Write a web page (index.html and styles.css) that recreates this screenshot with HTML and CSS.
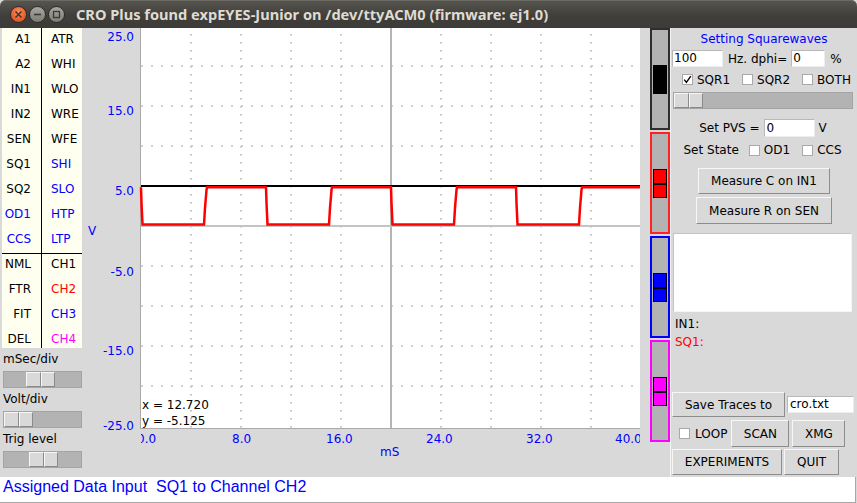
FILE: index.html
```html
<!DOCTYPE html>
<html lang="en">
<head>
<meta charset="utf-8">
<title>CRO Plus</title>
<link rel="stylesheet" href="styles.css">
</head>
<body>
<div class="window">
  <header class="titlebar">
    <div class="wm-buttons">
      <span class="wm wm-close"><svg width="9" height="9" viewBox="0 0 9 9"><path d="M1.5 1.5 L7.5 7.5 M7.5 1.5 L1.5 7.5" stroke="#3a3935" stroke-width="1.6" fill="none"/></svg></span>
      <span class="wm wm-min"><svg width="9" height="9" viewBox="0 0 9 9"><path d="M1 4.5 H8" stroke="#3a3935" stroke-width="1.6" fill="none"/></svg></span>
      <span class="wm wm-max"><svg width="9" height="9" viewBox="0 0 9 9"><rect x="1.5" y="1.5" width="6" height="6" stroke="#3a3935" stroke-width="1.3" fill="none"/></svg></span>
    </div>
    <h1 class="title">CRO Plus found expEYES-Junior on /dev/ttyACM0 (firmware: ej1.0)</h1>
  </header>

  <main class="workspace">
    <aside class="leftbar">
      <div class="cmdtable">
        <div class="cmd-grid cmd-top">
          <span class="c1">A1</span><span class="c2">ATR</span>
          <span class="c1">A2</span><span class="c2">WHI</span>
          <span class="c1">IN1</span><span class="c2">WLO</span>
          <span class="c1">IN2</span><span class="c2">WRE</span>
          <span class="c1">SEN</span><span class="c2">WFE</span>
          <span class="c1">SQ1</span><span class="c2 blue">SHI</span>
          <span class="c1">SQ2</span><span class="c2 blue">SLO</span>
          <span class="c1 blue">OD1</span><span class="c2 blue">HTP</span>
          <span class="c1 blue">CCS</span><span class="c2 blue">LTP</span>
        </div>
        <div class="cmd-grid cmd-bottom">
          <span class="c1">NML</span><span class="c2">CH1</span>
          <span class="c1">FTR</span><span class="c2 red">CH2</span>
          <span class="c1">FIT</span><span class="c2 blue">CH3</span>
          <span class="c1">DEL</span><span class="c2 magenta">CH4</span>
        </div>
      </div>
      <div class="ctl-label">mSec/div</div>
      <div class="hslider small"><span class="thumb" style="margin-left:22px"><i></i><i></i></span></div>
      <div class="ctl-label">Volt/div</div>
      <div class="hslider small"><span class="thumb" style="margin-left:0px"><i></i><i></i></span></div>
      <div class="ctl-label">Trig level</div>
      <div class="hslider small"><span class="thumb" style="margin-left:25px"><i></i><i></i></span></div>
    </aside>

    <section class="plot">
      <svg class="scope" width="558" height="449" viewBox="0 0 558 449">
        <defs>
          <clipPath id="xclip"><rect x="59" y="400" width="499" height="49"/></clipPath>
        </defs>
        <rect x="58" y="0" width="500" height="400" fill="#ffffff"/>
        <line x1="58.5" y1="0" x2="58.5" y2="401" stroke="#a9a9a9" stroke-width="1"/>
        <line x1="58" y1="400.5" x2="558" y2="400.5" stroke="#a9a9a9" stroke-width="1"/>
        <g stroke="#c2c2c2" stroke-width="1.6" stroke-dasharray="2 8">
          <line x1="59" y1="38" x2="558" y2="38"/>
          <line x1="59" y1="78" x2="558" y2="78"/>
          <line x1="59" y1="118" x2="558" y2="118"/>
          <line x1="59" y1="158" x2="558" y2="158"/>
          <line x1="59" y1="238" x2="558" y2="238"/>
          <line x1="59" y1="278" x2="558" y2="278"/>
          <line x1="59" y1="318" x2="558" y2="318"/>
          <line x1="59" y1="358" x2="558" y2="358"/>
        </g>
        <g stroke="#c2c2c2" stroke-width="2" stroke-dasharray="1.5 6.5">
          <line x1="109" y1="6" x2="109" y2="400"/>
          <line x1="159" y1="6" x2="159" y2="400"/>
          <line x1="209" y1="6" x2="209" y2="400"/>
          <line x1="259" y1="6" x2="259" y2="400"/>
          <line x1="359" y1="6" x2="359" y2="400"/>
          <line x1="409" y1="6" x2="409" y2="400"/>
          <line x1="459" y1="6" x2="459" y2="400"/>
          <line x1="509" y1="6" x2="509" y2="400"/>
        </g>
        <line x1="309" y1="0" x2="309" y2="400" stroke="#b4b4b4" stroke-width="2"/>
        <line x1="59" y1="198" x2="558" y2="198" stroke="#c4c4c4" stroke-width="2"/>
        <line x1="59" y1="158" x2="558" y2="158" stroke="#000000" stroke-width="2"/>
        <polyline fill="none" stroke="#ff0000" stroke-width="2.5" points="59,159.3 59.5,175 60.5,196.5 122,196.5 123,180 124.5,162 125,159.3 184,159.3 184.5,175 185.5,196.5 247,196.5 248,180 249.5,162 250,159.3 309,159.3 309.5,175 310.5,196.5 372,196.5 373,180 374.5,162 375,159.3 434,159.3 434.5,175 435.5,196.5 497,196.5 498,180 499.5,162 500,159.3 558,159.3"/>
        <g class="cursor-text">
          <text x="60" y="380.5">x = 12.720</text>
          <text x="60" y="396.5">y = -5.125</text>
        </g>
        <g class="axis-text" text-anchor="end">
          <text x="52" y="13">25.0</text>
          <text x="52" y="86.5">15.0</text>
          <text x="52" y="167">5.0</text>
          <text x="52" y="247.5">-5.0</text>
          <text x="52" y="327">-15.0</text>
          <text x="52" y="402">-25.0</text>
        </g>
        <text class="axis-text" x="6" y="206.5">V</text>
        <g class="axis-text" clip-path="url(#xclip)">
          <text x="55" y="414.5">0.0</text>
          <text x="150" y="414.5">8.0</text>
          <text x="244" y="414.5">16.0</text>
          <text x="344" y="414.5">24.0</text>
          <text x="444" y="414.5">32.0</text>
          <text x="533" y="414.5">40.0</text>
        </g>
        <text class="axis-text" x="298" y="427.5">mS</text>
      </svg>
    </section>

    <div class="vsliders">
      <div class="vslider v-black"><span class="thumb"><i></i><i></i></span></div>
      <div class="vslider v-red"><span class="thumb"><i></i><i></i></span></div>
      <div class="vslider v-blue"><span class="thumb"><i></i><i></i></span></div>
      <div class="vslider v-mag"><span class="thumb"><i></i><i></i></span></div>
    </div>

    <section class="panel">
      <div class="sq-title blue">Setting Squarewaves</div>
      <div class="freq-row">
        <span class="entry e-freq">100</span>
        <span class="freq-label">Hz. dphi=</span>
        <span class="entry e-phi">0</span>
        <span class="pct">%</span>
      </div>
      <div class="chk-row">
        <span class="chkitem"><span class="chk"><svg width="9" height="9" viewBox="0 0 9 9"><path d="M1.2 4.6 L3.4 7.4 L7.8 1.2" fill="none" stroke="#000" stroke-width="1.4"/></svg></span>SQR1</span>
        <span class="chkitem"><span class="chk"></span>SQR2</span>
        <span class="chkitem"><span class="chk"></span>BOTH</span>
      </div>
      <div class="hslider wide"><span class="thumb"><i></i><i></i></span></div>
      <div class="pvs-row">
        <span class="pvs-label">Set PVS =</span>
        <span class="entry e-pvs">0</span>
        <span class="unit">V</span>
      </div>
      <div class="state-row">
        <span class="state-label">Set State</span>
        <span class="chkitem"><span class="chk"></span>OD1</span>
        <span class="chkitem"><span class="chk"></span>CCS</span>
      </div>
      <button class="btn b-mc">Measure C on IN1</button>
      <button class="btn b-mr">Measure R on SEN</button>
      <div class="msgbox"></div>
      <div class="readouts">
        <div>IN1:</div>
        <div class="red">SQ1:</div>
      </div>
      <div class="actions">
        <div class="save-row">
          <button class="btn b-save">Save Traces to</button>
          <span class="entry e-file">cro.txt</span>
        </div>
        <div class="loop-row">
          <span class="chkitem loop"><span class="chk"></span>LOOP</span>
          <button class="btn b-scan">SCAN</button>
          <button class="btn b-xmg">XMG</button>
        </div>
        <div class="exit-row">
          <button class="btn b-exp">EXPERIMENTS</button>
          <button class="btn b-quit">QUIT</button>
        </div>
      </div>
    </section>
  </main>

  <footer class="status">Assigned Data Input  SQ1 to Channel CH2</footer>
</div>
</body>
</html>
```

FILE: styles.css
```css
html, body {
  margin: 0;
  padding: 0;
  background: #d9d9d9;
}

body {
  font-family: "DejaVu Sans", sans-serif;
  font-size: 12px;
  color: #000;
}

.window {
  width: 857px;
  height: 503px;
  display: flex;
  flex-direction: column;
  overflow: hidden;
}

/* ---------- title bar ---------- */
.titlebar {
  flex: none;
  height: 28px;
  display: flex;
  align-items: center;
  background: linear-gradient(#57564f, #403f3b 55%, #3c3b37);
  border-radius: 6px 6px 0 0;
  box-shadow: inset 0 1px 0 #6b6a64;
}

.wm-buttons {
  display: flex;
  gap: 2px;
  margin-left: 10px;
}

.wm {
  width: 17px;
  height: 17px;
  box-sizing: border-box;
  border-radius: 50%;
  display: flex;
  align-items: center;
  justify-content: center;
  border: 1px solid #2c2b28;
}

.wm svg { display: block; }

.wm-close {
  background: radial-gradient(circle at 50% 35%, #f88d5e, #e55d2b 65%, #c9471c);
}

.wm-min,
.wm-max {
  background: linear-gradient(#a9a79f, #7d7b75);
}

.title {
  margin: 0 0 0 11px;
  font-family: "Noto Sans", sans-serif;
  font-weight: bold;
  font-size: 14.6px;
  color: #dfdbd2;
  white-space: nowrap;
}

/* ---------- workspace ---------- */
.workspace {
  flex: none;
  height: 449px;
  display: flex;
}

.leftbar {
  flex: none;
  width: 82px;
}

.cmdtable {
  width: 80px;
  margin-left: 2px;
  background: #fffff0;
}

.cmd-grid {
  display: grid;
  grid-template-columns: 40px 40px;
}

.cmd-top {
  grid-auto-rows: 25px;
  border-bottom: 1px solid #000;
}

.cmd-bottom {
  grid-template-rows: 25px 25px 25px 19px;
}

.cmd-grid span {
  line-height: 22px;
  white-space: nowrap;
}

.cmd-bottom span {
  line-height: 21px;
}

.c1 {
  box-sizing: border-box;
  border-right: 1px solid #000;
  text-align: right;
  padding-right: 10px;
}

.c2 {
  padding-left: 9px;
}

.blue { color: #0000ff; }
.red { color: #ff0000; }
.magenta { color: #ff00ff; }

.ctl-label {
  height: 22px;
  line-height: 22px;
  padding-left: 3px;
}

/* horizontal slider */
.hslider {
  box-sizing: border-box;
  height: 17px;
  border: 1px solid #a4a4a4;
  background: #b3b3b3;
  display: flex;
}

.hslider.small {
  width: 79px;
  margin: 1px 0 0 3px;
}

.hslider.wide {
  width: 180px;
  margin-left: 2px;
}

.hslider .thumb {
  display: flex;
  height: 15px;
}

.hslider .thumb i {
  box-sizing: border-box;
  width: 15px;
  height: 15px;
  background: #d9d9d9;
  border: 1px solid;
  border-color: #f7f7f7 #8a8a8a #8a8a8a #f7f7f7;
}

.hslider .thumb i + i {
  width: 14px;
}

/* ---------- plot ---------- */
.plot {
  flex: none;
  width: 558px;
}

.scope {
  display: block;
  font-family: "DejaVu Sans", sans-serif;
  font-size: 12px;
}

.axis-text { fill: #0000ff; }
.cursor-text { fill: #000; }

/* ---------- vertical sliders ---------- */
.vsliders {
  flex: none;
  width: 20px;
  margin-left: 10px;
  display: flex;
  flex-direction: column;
  gap: 2px;
}

.vslider {
  box-sizing: border-box;
  height: 102px;
  border: 2px solid;
  background: #b3b3b3;
  display: flex;
  align-items: center;
  justify-content: center;
}

.vslider .thumb {
  display: flex;
  flex-direction: column;
  width: 14px;
}

.vslider .thumb i {
  box-sizing: border-box;
  height: 15px;
  border: 1px solid;
}

.vslider .thumb i + i { height: 14px; }

.v-black { border-color: #2e2e2e; }
.v-black i { background: #000; border-color: #5c5c5c #111 #111 #5c5c5c; }

.v-red { border-color: #ff2222; }
.v-red i { background: #ff0000; border-color: #ff8a8a #b40000 #b40000 #ff8a8a; }

.v-blue { border-color: #0000ff; }
.v-blue i { background: #0000ff; border-color: #7070ff #0000a8 #0000a8 #7070ff; }

.v-mag { border-color: #ff00ff; }
.v-mag i { background: #ff00ff; border-color: #ff8aff #b000b0 #b000b0 #ff8aff; }

/* ---------- right panel ---------- */
.panel {
  flex: none;
  width: 186px;
  border-left: 1px solid #f4f4f4;
  display: flex;
  flex-direction: column;
}

.sq-title {
  height: 22px;
  line-height: 22px;
  text-align: center;
}

.entry {
  box-sizing: border-box;
  display: block;
  background: #fff;
  border: 1px solid;
  border-color: #b8b8b8 #ededed #ededed #b8b8b8;
  padding-left: 1px;
  height: 17px;
  line-height: 15px;
  white-space: nowrap;
}

.freq-row {
  height: 17px;
  display: flex;
  align-items: center;
  padding-left: 1px;
}

.e-freq { width: 51px; }
.e-phi { width: 34px; }
.freq-label { margin: 0 4px 0 5px; }
.pct { margin-left: 5px; }

.chk-row {
  height: 25px;
  display: flex;
  align-items: center;
  gap: 12px;
  padding-left: 11px;
}

.chkitem {
  display: flex;
  align-items: center;
}

.chk {
  box-sizing: border-box;
  width: 11px;
  height: 11px;
  margin-right: 4px;
  background: #fff;
  border: 1px solid #a9a9a9;
  display: flex;
  align-items: center;
  justify-content: center;
}

.chk svg { display: block; }

.pvs-row {
  margin-top: 10px;
  height: 18px;
  display: flex;
  align-items: center;
  justify-content: center;
  padding-right: 2px;
}

.pvs-label { margin-right: 4px; }
.e-pvs { width: 51px; height: 18px; line-height: 16px; padding-left: 2px; }
.unit { margin-left: 4px; }

.state-row {
  margin-top: 2px;
  height: 22px;
  display: flex;
  align-items: center;
  justify-content: center;
  padding-right: 3px;
}

.state-label { margin-right: 10px; }
.state-row .chkitem + .chkitem { margin-left: 12px; }

.btn {
  box-sizing: border-box;
  margin: 0;
  padding: 0;
  height: 26px;
  background: #d9d9d9;
  border: 1px solid;
  border-color: #f7f7f7 #8c8c8c #8c8c8c #f7f7f7;
  font-family: "DejaVu Sans", sans-serif;
  font-size: 12px;
  color: #000;
  display: flex;
  align-items: center;
  justify-content: center;
  white-space: nowrap;
}

.b-mc {
  align-self: center;
  width: 132px;
  margin-top: 7px;
}

.b-mr {
  align-self: center;
  width: 136px;
  height: 27px;
  margin-top: 3px;
}

.msgbox {
  box-sizing: border-box;
  height: 79px;
  margin: 9px 5px 0 2px;
  background: #fff;
  border: 1px solid;
  border-color: #c4c4c4 #f4f4f4 #f4f4f4 #c4c4c4;
}

.readouts {
  margin-top: 3px;
  padding-left: 4px;
  line-height: 18px;
}

.actions {
  margin-top: auto;
  padding-bottom: 2px;
}

.save-row {
  display: flex;
  align-items: center;
  padding-left: 1px;
}

.b-save { width: 113px; height: 25px; }
.e-file { width: 67px; margin-left: 2px; padding-left: 2px; }

.loop-row {
  margin-top: 3px;
  display: flex;
  align-items: center;
  padding-left: 8px;
}

.loop .chk { margin-right: 5px; }
.b-scan { width: 58px; height: 27px; margin-left: 4px; }
.b-xmg { width: 53px; height: 27px; margin-left: 3px; }

.exit-row {
  margin-top: 2px;
  display: flex;
  padding-left: 1px;
}

.b-exp { width: 110px; }
.b-quit { width: 55px; margin-left: 2px; }

/* ---------- status bar ---------- */
.status {
  flex: none;
  box-sizing: border-box;
  width: 856px;
  height: 26px;
  padding: 1px 0 0 3px;
  background: #fff;
  border-right: 1px solid #a8a8a8;
  border-bottom: 1px solid #a8a8a8;
  font-family: "Liberation Sans", Arial, sans-serif;
  font-size: 16px;
  color: #0000ff;
  white-space: pre;
}
```
